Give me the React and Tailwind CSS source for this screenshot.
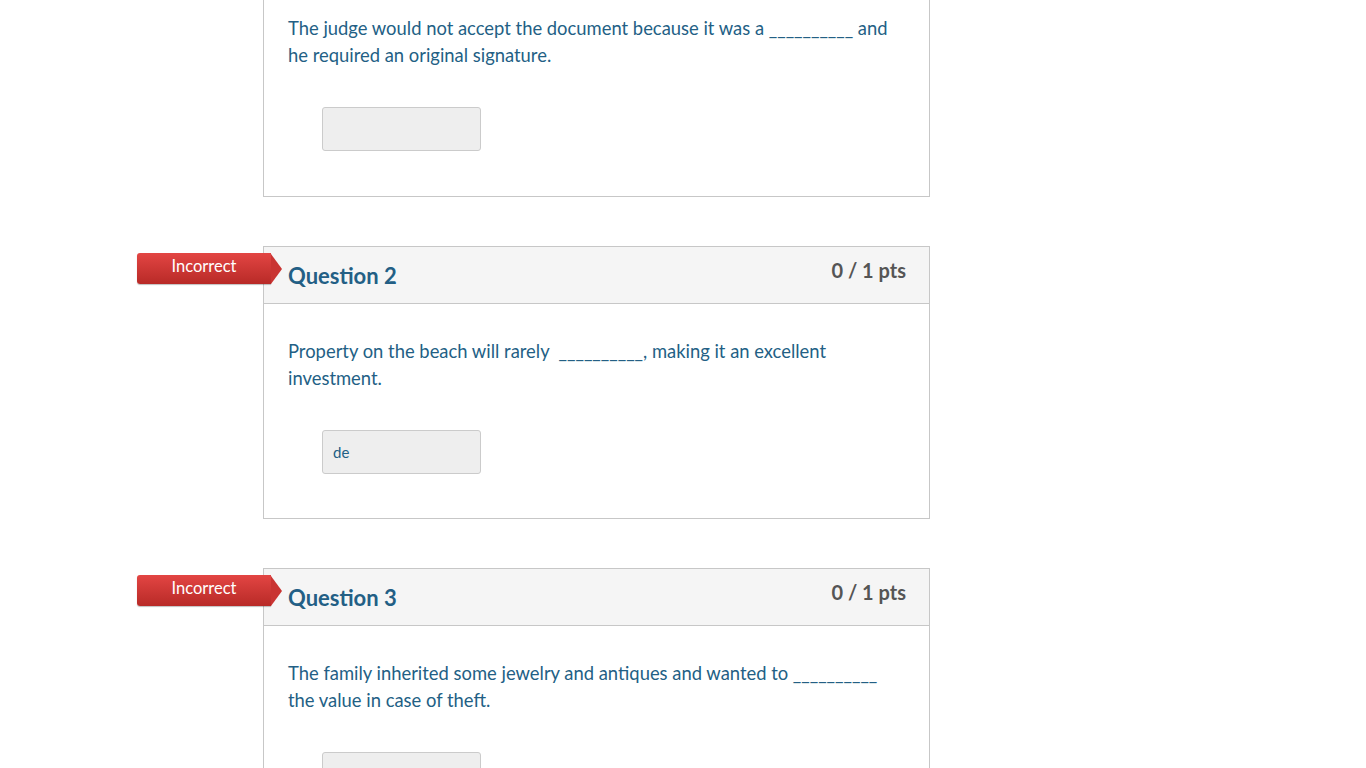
import React from "react";

const questions = [
  {
    n: 1,
    badge: null,
    noHeader: true,
    lines: "The judge would not accept the document because it was a __________ and he required an original signature.",
    value: "",
  },
  {
    n: 2,
    badge: "Incorrect",
    lines: "Property on the beach will rarely  __________, making it an excellent investment.",
    value: "de",
  },
  {
    n: 3,
    badge: "Incorrect",
    lines: "The family inherited some jewelry and antiques and wanted to __________ the value in case of theft.",
    value: "",
  },
];

function Badge({ text }) {
  return (
    <div className="absolute left-[-127px] top-[6px] flex items-center">
      <div className="w-[134px] h-[31px] rounded-l-[3px] bg-gradient-to-b from-[#e34543] to-[#b82a27] text-white text-[16.5px] leading-[26px] text-center shadow-[0_1px_1px_rgba(0,0,0,0.25)]">
        {text}
      </div>
      <div className="w-0 h-0 border-y-[15.5px] border-y-transparent border-l-[11px] border-l-[#c93432]" />
    </div>
  );
}

function Card({ q }) {
  return (
    <div className="relative w-[667px] border border-[#c7c7c7] bg-white">
      {q.badge && <Badge text={q.badge} />}
      {!q.noHeader && (
        <div className="h-[57px] bg-[#f5f5f5] border-b border-[#c7c7c7] flex items-start justify-between pl-[24px] pr-[23px]">
          <div className="mt-[14px] text-[22px] leading-[30px] font-bold text-[#235f85]">Question {q.n}</div>
          <div className="mt-[10px] text-[20px] leading-[26px] font-bold text-[#555555]">0 / 1 pts</div>
        </div>
      )}
      <div className={q.noHeader ? "pt-[34px] pb-[45px] px-[24px]" : "pt-[34px] pb-[44px] px-[24px]"}>
        <p className="text-[18.4px] leading-[27px] text-[#235f85] w-[610px] whitespace-pre-wrap">{q.lines}</p>
        <div className="mt-[38px] ml-[34px] w-[159px] h-[44px] rounded-[3px] border border-[#cbcbcb] bg-[#eeeeee] px-[10px] flex items-center text-[15px] text-[#235f85]">
          {q.value}
        </div>
      </div>
    </div>
  );
}

export default function App() {
  return (
    <div className="w-[1366px] h-[768px] overflow-hidden bg-white" style={{ fontFamily: "Lato, 'Open Sans', sans-serif" }}>
      <div className="ml-[263px] -mt-[20px] flex flex-col gap-[49px]">
        {questions.map((q) => (
          <Card key={q.n} q={q} />
        ))}
      </div>
    </div>
  );
}
